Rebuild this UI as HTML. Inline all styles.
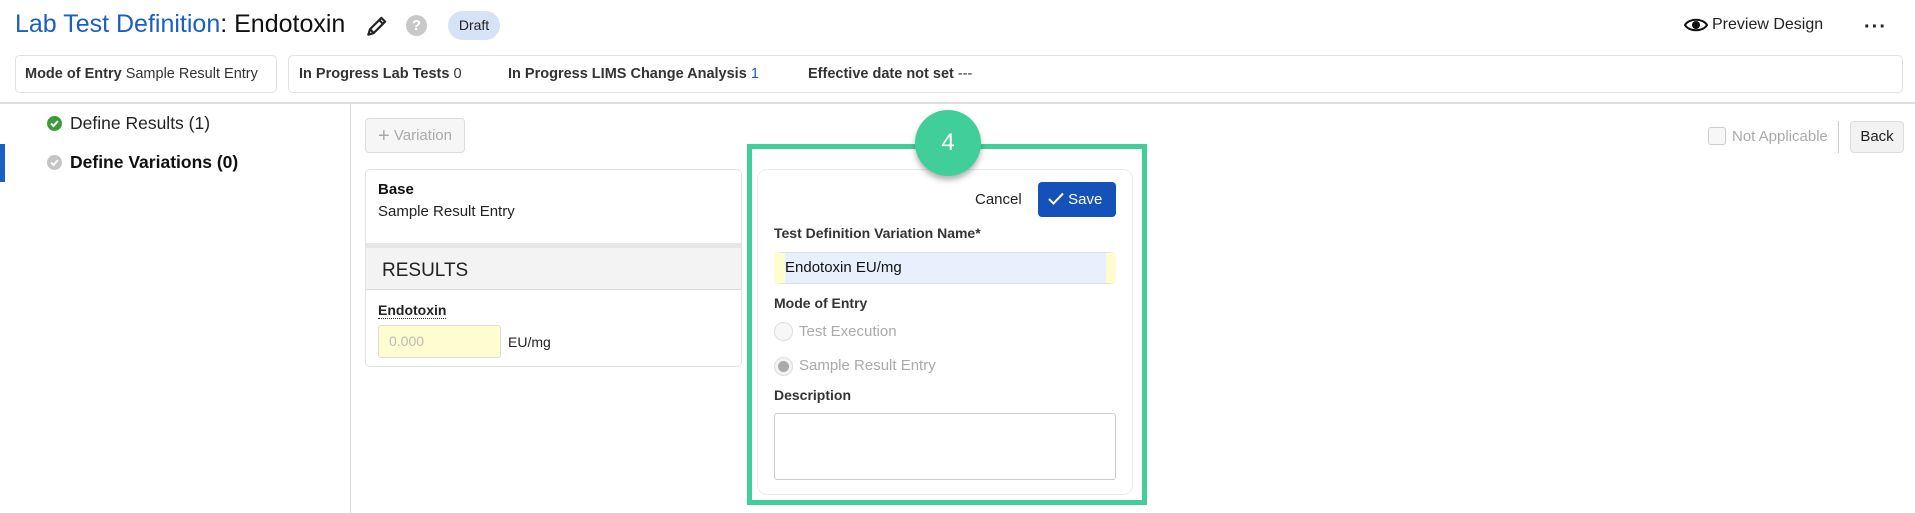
<!DOCTYPE html>
<html><head><style>
*{box-sizing:border-box;margin:0;padding:0}
body{width:1915px;height:513px;overflow:hidden;background:#fff;font-family:"Liberation Sans",Arial,sans-serif;color:#222;position:relative}
.a{position:absolute;white-space:nowrap}
.box{position:absolute;border:1px solid #e2e2e2;border-radius:5px;background:#fff}
b{font-weight:bold}
</style></head><body>
<div class="a" style="left:15px;top:10px;font-size:25px;color:#111"><span style="color:#1a5fc2">Lab Test Definition</span>: Endotoxin</div>
<svg class="a" style="left:364px;top:13px" width="26" height="26" viewBox="0 0 24 24"><path d="M4 20l1.5-5L16 4.5l3.5 3.5L9 18.5z M14 6.5l3.5 3.5 M5.5 15l3.5 3.5" fill="none" stroke="#222" stroke-width="2" stroke-linejoin="round"/></svg>
<div class="a" style="left:406px;top:15px;width:21px;height:21px;border-radius:50%;background:#c8c8c8;color:#fff;font-weight:bold;font-size:15px;text-align:center;line-height:21px">?</div>
<div class="a" style="left:448px;top:11px;width:52px;height:29px;border-radius:15px;background:#d6e3f7;font-size:14px;text-align:center;line-height:29px;color:#222">Draft</div>
<svg class="a" style="left:1684px;top:17px" width="24" height="16" viewBox="0 0 24 16"><path d="M1 8C5 1 19 1 23 8 19 15 5 15 1 8z" fill="none" stroke="#111" stroke-width="2"/><circle cx="12" cy="8" r="4" fill="#111"/></svg>
<div class="a" style="left:1712px;top:16px;font-size:16px;color:#222">Preview Design</div>
<div class="a" style="left:1864px;top:16px;font-size:20px;font-weight:bold;letter-spacing:1px">···</div>

<div class="box" style="left:15px;top:55px;width:262px;height:38px"></div>
<div class="box" style="left:288px;top:55px;width:1615px;height:38px"></div>
<div class="a" style="left:25px;top:66px;font-size:14.5px;color:#333"><b>Mode of Entry</b> Sample Result Entry</div>
<div class="a" style="left:299px;top:66px;font-size:14.5px;color:#333"><b>In Progress Lab Tests</b> 0</div>
<div class="a" style="left:508px;top:66px;font-size:14.5px;color:#333"><b>In Progress LIMS Change Analysis</b> <span style="color:#1a5fc2">1</span></div>
<div class="a" style="left:808px;top:66px;font-size:14.5px;color:#333"><b>Effective date not set</b> ---</div>
<div class="a" style="left:0;top:102px;width:1915px;height:2px;background:#ddd"></div>
<div class="a" style="left:350px;top:104px;width:1px;height:409px;background:#ddd"></div>

<div class="a" style="left:47px;top:116px;width:15px;height:15px;border-radius:50%;background:#3c9a3c"><svg width="15" height="15" viewBox="0 0 15 15"><path d="M4 7.5l2.5 2.5 4.5-5" fill="none" stroke="#fff" stroke-width="2"/></svg></div>
<div class="a" style="left:70px;top:113px;font-size:17.5px">Define Results (1)</div>
<div class="a" style="left:0;top:144px;width:5px;height:38px;background:#1a5fc2"></div>
<div class="a" style="left:47px;top:155px;width:15px;height:15px;border-radius:50%;background:#c4c4c4"><svg width="15" height="15" viewBox="0 0 15 15"><path d="M4 7.5l2.5 2.5 4.5-5" fill="none" stroke="#fff" stroke-width="2"/></svg></div>
<div class="a" style="left:70px;top:152px;font-size:17.5px;font-weight:bold;color:#111">Define Variations (0)</div>

<div class="a" style="left:365px;top:118px;width:100px;height:35px;border:1px solid #ddd;border-radius:4px;background:#f6f6f6;color:#aaa;font-size:15px;line-height:33px;text-align:center"><span style="font-size:20px;vertical-align:-2px">+</span> Variation</div>

<div class="box" style="left:365px;top:169px;width:377px;height:198px;overflow:hidden">
 <div class="a" style="left:12px;top:11px;font-size:15px;font-weight:bold;color:#111">Base</div>
 <div class="a" style="left:12px;top:33px;font-size:15px">Sample Result Entry</div>
 <div class="a" style="left:0;top:73px;width:377px;height:47px;background:#f3f3f3;border-top:5px solid #e6e6e6;border-bottom:1px solid #ddd"></div>
 <div class="a" style="left:16px;top:90px;font-size:19px;color:#222">RESULTS</div>
 <div class="a" style="left:12px;top:132px;font-size:14px;font-weight:bold;border-bottom:1px dotted #333">Endotoxin</div>
 <div class="a" style="left:12px;top:155px;width:123px;height:33px;background:#fdfdcf;border:1px solid #ddd;border-radius:3px;font-size:14px;color:#bbb;line-height:31px;padding-left:10px">0.000</div>
 <div class="a" style="left:142px;top:164px;font-size:14px">EU/mg</div>
</div>

<div class="a" style="left:747px;top:144px;width:400px;height:361px;border:5px solid #40cf9a"></div>
<div class="box" style="left:757px;top:169px;width:376px;height:326px;border-radius:10px;border-color:#ececec"></div>
<div class="a" style="left:915px;top:110px;width:66px;height:66px;border-radius:50%;background:#40cf9a;box-shadow:0 4px 6px rgba(0,0,0,.3);color:#fff;font-size:24px;text-align:center;line-height:66px">4</div>
<div class="a" style="left:975px;top:191px;font-size:15px;color:#222">Cancel</div>
<div class="a" style="left:1038px;top:182px;width:78px;height:35px;border-radius:4px;background:#1451b8;color:#fff;font-size:15px;line-height:35px;padding-left:10px"><svg width="16" height="13" viewBox="0 0 16 13" style="vertical-align:-1px"><path d="M1 7l4.5 4.5L15 1.5" fill="none" stroke="#fff" stroke-width="2"/></svg> Save</div>
<div class="a" style="left:774px;top:225px;font-size:14px;font-weight:bold;color:#333">Test Definition Variation Name*</div>
<div class="a" style="left:774px;top:252px;width:342px;height:32px;border:1px solid #ddd;border-radius:3px;background:#e8effd;border-left:11px solid #fdfdcf;border-right:10px solid #fdfdcf;font-size:15px;line-height:30px;padding-left:0;color:#111">Endotoxin EU/mg</div>
<div class="a" style="left:774px;top:295px;font-size:14px;font-weight:bold;color:#333">Mode of Entry</div>
<div class="a" style="left:774px;top:322px;width:19px;height:19px;border-radius:50%;border:1px solid #ddd;background:#f7f7f7"></div>
<div class="a" style="left:799px;top:323px;font-size:15px;color:#aaa">Test Execution</div>
<div class="a" style="left:774px;top:357px;width:19px;height:19px;border-radius:50%;border:1px solid #ddd;background:#f3f3f3"><div style="margin:3px;width:11px;height:11px;border-radius:50%;background:#aaa"></div></div>
<div class="a" style="left:799px;top:357px;font-size:15px;color:#aaa">Sample Result Entry</div>
<div class="a" style="left:774px;top:387px;font-size:14px;font-weight:bold;color:#333">Description</div>
<div class="a" style="left:774px;top:413px;width:342px;height:67px;border:1px solid #ccc;border-radius:3px"></div>

<div class="a" style="left:1708px;top:127px;width:18px;height:18px;border:1px solid #ccc;border-radius:3px;background:#f7f7f7"></div>
<div class="a" style="left:1732px;top:128px;font-size:15px;color:#aaa">Not Applicable</div>
<div class="a" style="left:1838px;top:121px;width:1px;height:32px;background:#ccc"></div>
<div class="a" style="left:1850px;top:121px;width:54px;height:32px;border:1px solid #ddd;border-radius:4px;background:#f2f2f2;font-size:15px;line-height:30px;text-align:center;color:#222">Back</div>
</body></html>
